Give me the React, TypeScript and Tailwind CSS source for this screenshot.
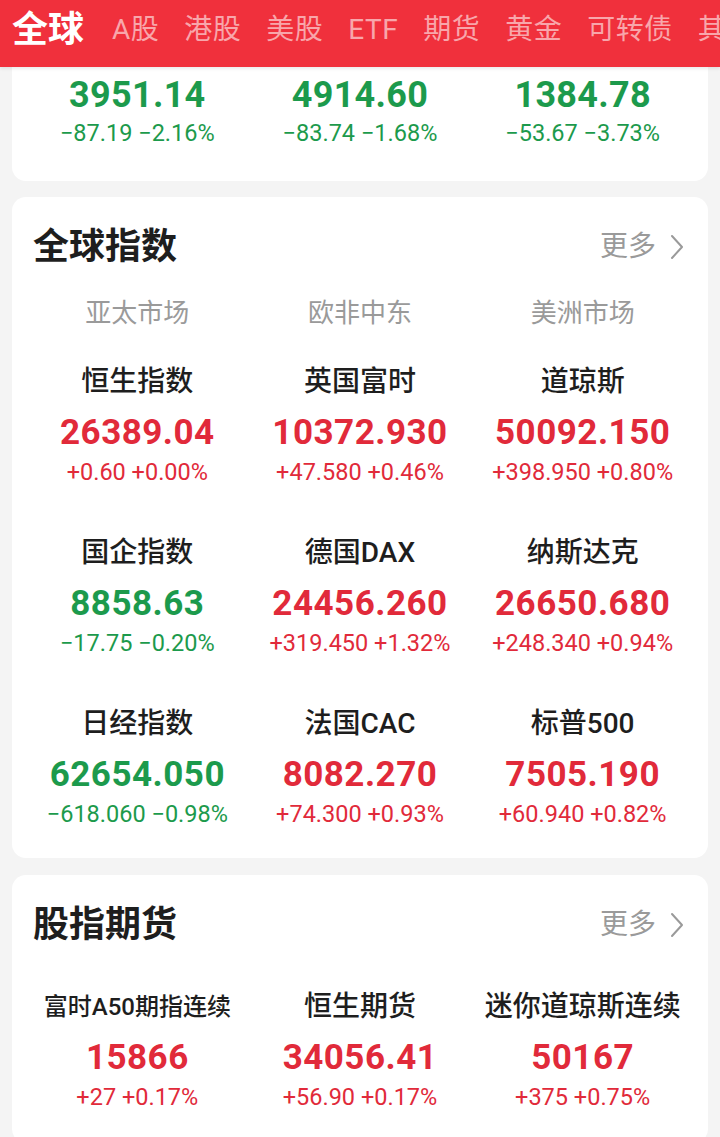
import React from "react";

const FONT = { fontFamily: 'Roboto, "Noto Sans CJK SC", sans-serif' };

type Item = { name: string; value: string; change: string; up: boolean; small?: boolean };

const topItems: Item[] = [
  { name: "", value: "3951.14", change: "−87.19 −2.16%", up: false },
  { name: "", value: "4914.60", change: "−83.74 −1.68%", up: false },
  { name: "", value: "1384.78", change: "−53.67 −3.73%", up: false },
];

const globalRows: Item[][] = [
  [
    { name: "恒生指数", value: "26389.04", change: "+0.60 +0.00%", up: true },
    { name: "英国富时", value: "10372.930", change: "+47.580 +0.46%", up: true },
    { name: "道琼斯", value: "50092.150", change: "+398.950 +0.80%", up: true },
  ],
  [
    { name: "国企指数", value: "8858.63", change: "−17.75 −0.20%", up: false },
    { name: "德国DAX", value: "24456.260", change: "+319.450 +1.32%", up: true },
    { name: "纳斯达克", value: "26650.680", change: "+248.340 +0.94%", up: true },
  ],
  [
    { name: "日经指数", value: "62654.050", change: "−618.060 −0.98%", up: false },
    { name: "法国CAC", value: "8082.270", change: "+74.300 +0.93%", up: true },
    { name: "标普500", value: "7505.190", change: "+60.940 +0.82%", up: true },
  ],
];

const futures: Item[] = [
  { name: "富时A50期指连续", value: "15866", change: "+27 +0.17%", up: true, small: true },
  { name: "恒生期货", value: "34056.41", change: "+56.90 +0.17%", up: true },
  { name: "迷你道琼斯连续", value: "50167", change: "+375 +0.75%", up: true },
];

function Cell({ item }: { item: Item }) {
  const color = item.up ? "text-[#e12a3a]" : "text-[#1c9a4c]";
  return (
    <div className="flex flex-col items-center">
      <div
        className={`h-[40px] leading-[40px] font-medium text-[#1e1e1e] whitespace-nowrap ${
          item.small ? "text-[24px]" : "text-[28px]"
        }`}
      >
        {item.name}
      </div>
      <div className={`mt-[10px] h-[42px] leading-[42px] text-[35px] font-bold tracking-[0.5px] ${color}`}>
        {item.value}
      </div>
      <div className={`mt-[3px] h-[30px] leading-[30px] text-[23.5px] whitespace-nowrap ${color}`}>
        {item.change}
      </div>
    </div>
  );
}

function Chevron() {
  return (
    <svg width="18" height="26" viewBox="0 0 18 26" fill="none" className="ml-[12px]">
      <path d="M4 2 L14 13 L4 24" stroke="#9a9a9a" strokeWidth="2" strokeLinecap="round" strokeLinejoin="round" />
    </svg>
  );
}

function CardHeader({ title }: { title: string }) {
  return (
    <div className="h-[100px] flex items-center justify-between pl-[7px] pr-[8px]">
      <div className="text-[36px] font-bold text-[#1e1e1e] leading-none">{title}</div>
      <div className="flex items-center text-[28px] text-[#9a9a9a] leading-none">
        <span>更多</span>
        <Chevron />
      </div>
    </div>
  );
}

export default function App() {
  const tabs = ["A股", "港股", "美股", "ETF", "期货", "黄金", "可转债", "其他"];
  return (
    <div className="w-[720px] h-[1137px] overflow-hidden bg-[#f4f4f4]" style={FONT}>
      {/* Header */}
      <div className="h-[67px] bg-[#f0303c] flex items-center pb-[7px] pl-[12px] overflow-hidden whitespace-nowrap shadow-[0_2px_3px_rgba(0,0,0,0.08)] relative z-10">
        <span className="text-[36px] font-bold text-white leading-none mr-[28px] shrink-0">全球</span>
        {tabs.map((t) => (
          <span key={t} className="text-[28px] text-[#f8a6ab] leading-none mr-[25px] shrink-0 tracking-[0.5px]">
            {t}
          </span>
        ))}
      </div>

      {/* Top card */}
      <div className="mx-[12px] bg-white rounded-b-[14px] px-[14px] pt-[7px] pb-[33px]">
        <div className="grid grid-cols-3">
          {topItems.map((it, i) => (
            <div key={i} className="flex flex-col items-center">
              <div className="h-[42px] leading-[42px] text-[36px] font-bold tracking-[0.3px] text-[#1c9a4c]">
                {it.value}
              </div>
              <div className="mt-[2px] h-[30px] leading-[30px] text-[23.5px] text-[#1c9a4c] whitespace-nowrap">
                {it.change}
              </div>
            </div>
          ))}
        </div>
      </div>

      {/* Global indices */}
      <div className="mx-[12px] mt-[16px] bg-white rounded-[14px] px-[14px] pb-[29px]">
        <CardHeader title="全球指数" />
        <div className="grid grid-cols-3 h-[32px] items-center">
          {["亚太市场", "欧非中东", "美洲市场"].map((r) => (
            <div key={r} className="text-center text-[26px] text-[#9a9a9a] leading-[32px]">
              {r}
            </div>
          ))}
        </div>
        <div className="mt-[33px] grid grid-cols-3 gap-y-[46px]">
          {globalRows.flat().map((it) => (
            <Cell key={it.name} item={it} />
          ))}
        </div>
      </div>

      {/* Futures */}
      <div className="mx-[12px] mt-[17px] bg-white rounded-[14px] px-[14px] pb-[31px]">
        <CardHeader title="股指期货" />
        <div className="mt-[12px] grid grid-cols-3">
          {futures.map((it) => (
            <Cell key={it.name} item={it} />
          ))}
        </div>
      </div>
    </div>
  );
}
